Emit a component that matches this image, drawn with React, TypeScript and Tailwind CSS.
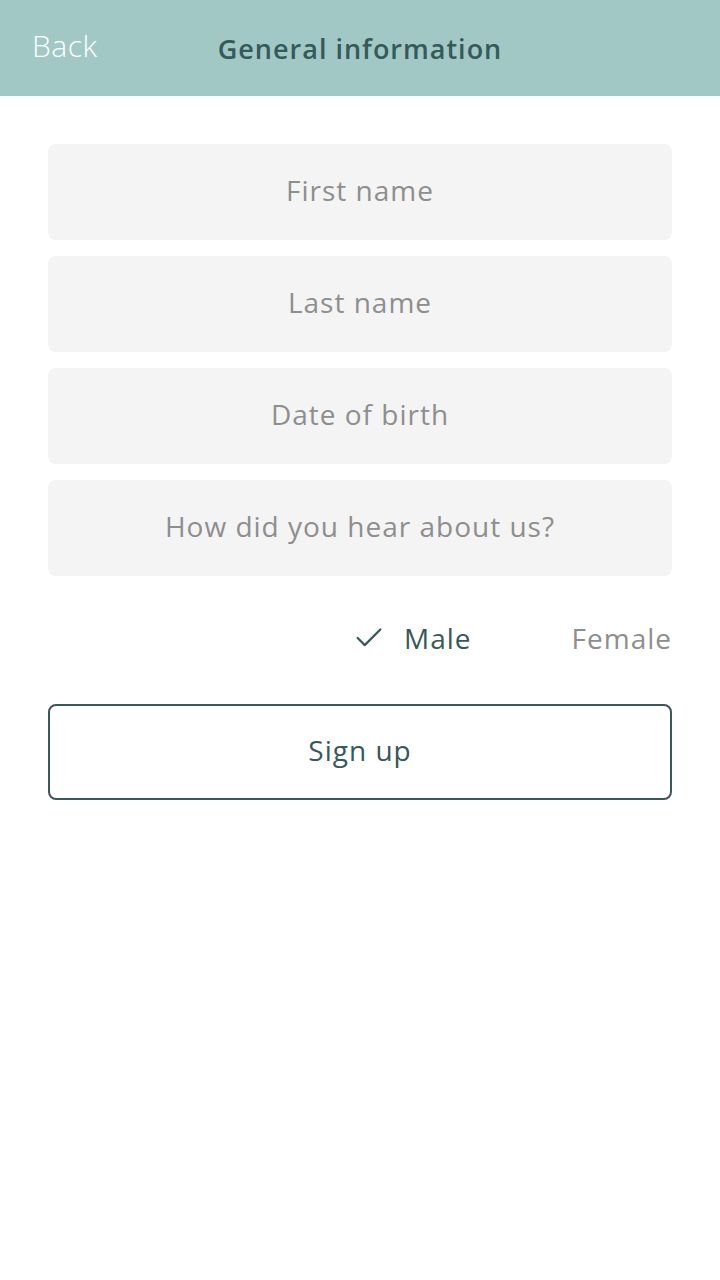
import { Check } from 'lucide-react';

const fields = ['First name', 'Last name', 'Date of birth', 'How did you hear about us?'];

export default function App() {
  return (
    <div className="min-h-[1280px] w-[720px] bg-white font-['Open_Sans',sans-serif]">
      <header className="relative flex h-[96px] items-center justify-center bg-[#a1c8c5]">
        <button className="absolute left-[32px] top-[26px] text-[30px] font-light leading-[40px] tracking-[0.5px] text-white">
          Back
        </button>
        <h1 className="pt-[2px] text-[27px] font-semibold tracking-[1px] text-[#36595a]">General information</h1>
      </header>

      <main className="flex flex-col px-[48px] pt-[48px]">
        <div className="flex flex-col gap-[16px]">
          {fields.map((f) => (
            <input
              key={f}
              placeholder={f}
              className="h-[96px] w-full rounded-[8px] bg-[#f4f4f4] pb-[4px] text-center text-[28px] tracking-[1px] text-[#36595a] outline-none placeholder:text-[#8e8e8e]"
            />
          ))}
        </div>

        <div className="flex h-[128px] items-center justify-end pb-[4px] text-[28px] tracking-[1px]">
          <div className="flex items-center gap-[18px] text-[#36595a]">
            <Check size={34} strokeWidth={1.6} />
            <span>Male</span>
          </div>
          <span className="ml-[100px] text-[#8e8e8e]">Female</span>
        </div>

        <button className="h-[96px] w-full rounded-[8px] border-2 border-[#36595a] pb-[4px] text-[28px] tracking-[1px] text-[#36595a]">
          Sign up
        </button>
      </main>
    </div>
  );
}
